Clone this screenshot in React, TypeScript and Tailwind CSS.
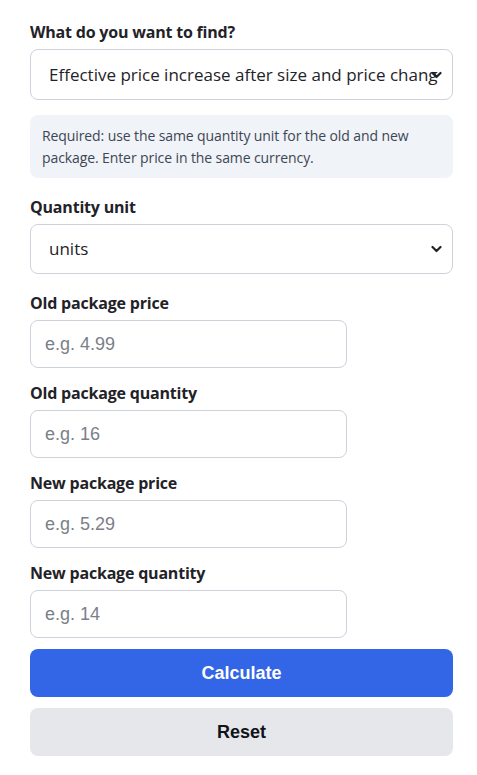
import React from "react";

const labelCls =
  "block text-[16px] leading-[24px] font-bold text-[#1f2328] mb-[5px] tracking-[-0.2px]";
const inputCls =
  "block w-[317px] h-[48px] rounded-[8px] border border-[#cdd2db] bg-white px-[14px] text-[18px] text-[#1f2328] placeholder:text-[#7a7f88] outline-none";
const fontSans = "font-['Open_Sans','Noto_Sans',sans-serif]";
const fontArial = "font-['Liberation_Sans',Arial,sans-serif]";

function Chevron() {
  return (
    <svg
      className="pointer-events-none absolute right-[11px] top-1/2 -translate-y-1/2"
      width="11"
      height="8"
      viewBox="0 0 11 8"
      fill="none"
    >
      <path d="M1.5 2l4 4 4-4" stroke="#1f2328" strokeWidth="2.2" strokeLinecap="round" strokeLinejoin="round" />
    </svg>
  );
}

function Select({ value, height }: { value: string; height: string }) {
  return (
    <div className="relative">
      <select
        defaultValue={value}
        className={`block w-full ${height} appearance-none rounded-[8px] border border-[#cdd2db] bg-white pl-[18px] pr-[14px] text-[17px] text-[#1f2328] outline-none overflow-hidden whitespace-nowrap ${fontSans}`}
      >
        <option>{value}</option>
      </select>
      <Chevron />
    </div>
  );
}

function Field({ label, placeholder }: { label: string; placeholder: string }) {
  return (
    <div className="mb-[13px]">
      <label className={labelCls}>{label}</label>
      <input type="text" placeholder={placeholder} className={`${inputCls} ${fontArial}`} />
    </div>
  );
}

export default function App() {
  return (
    <div className={`w-[477px] min-h-[775px] bg-white ${fontSans}`}>
      <div className="px-[30px] pt-[20px] w-[483px]">
        <label className={labelCls}>What do you want to find?</label>
        <Select value="Effective price increase after size and price change" height="h-[51px]" />

        <div className="mt-[15px] rounded-[8px] bg-[#f0f3f8] px-[12px] pt-[10px] pb-[9px] text-[14px] leading-[22px] text-[#3d4654] tracking-[-0.1px]">
          Required: use the same quantity unit for the old and new package. Enter price in the same currency.
        </div>

        <div className="mt-[17px] mb-[17px]">
          <label className={labelCls}>Quantity unit</label>
          <Select value="units" height="h-[50px]" />
        </div>

        <Field label="Old package price" placeholder="e.g. 4.99" />
        <Field label="Old package quantity" placeholder="e.g. 16" />
        <Field label="New package price" placeholder="e.g. 5.29" />
        <div>
          <label className={labelCls}>New package quantity</label>
          <input type="text" placeholder="e.g. 14" className={`${inputCls} ${fontArial}`} />
        </div>

        <button
          className={`mt-[11px] block w-[423px] h-[48px] rounded-[8px] bg-[#3366e6] text-white text-[18px] font-bold ${fontArial}`}
        >
          Calculate
        </button>
        <button
          className={`mt-[11px] block w-[423px] h-[48px] rounded-[8px] bg-[#e5e7eb] text-[#111318] text-[18px] font-bold ${fontArial}`}
        >
          Reset
        </button>
      </div>
    </div>
  );
}
